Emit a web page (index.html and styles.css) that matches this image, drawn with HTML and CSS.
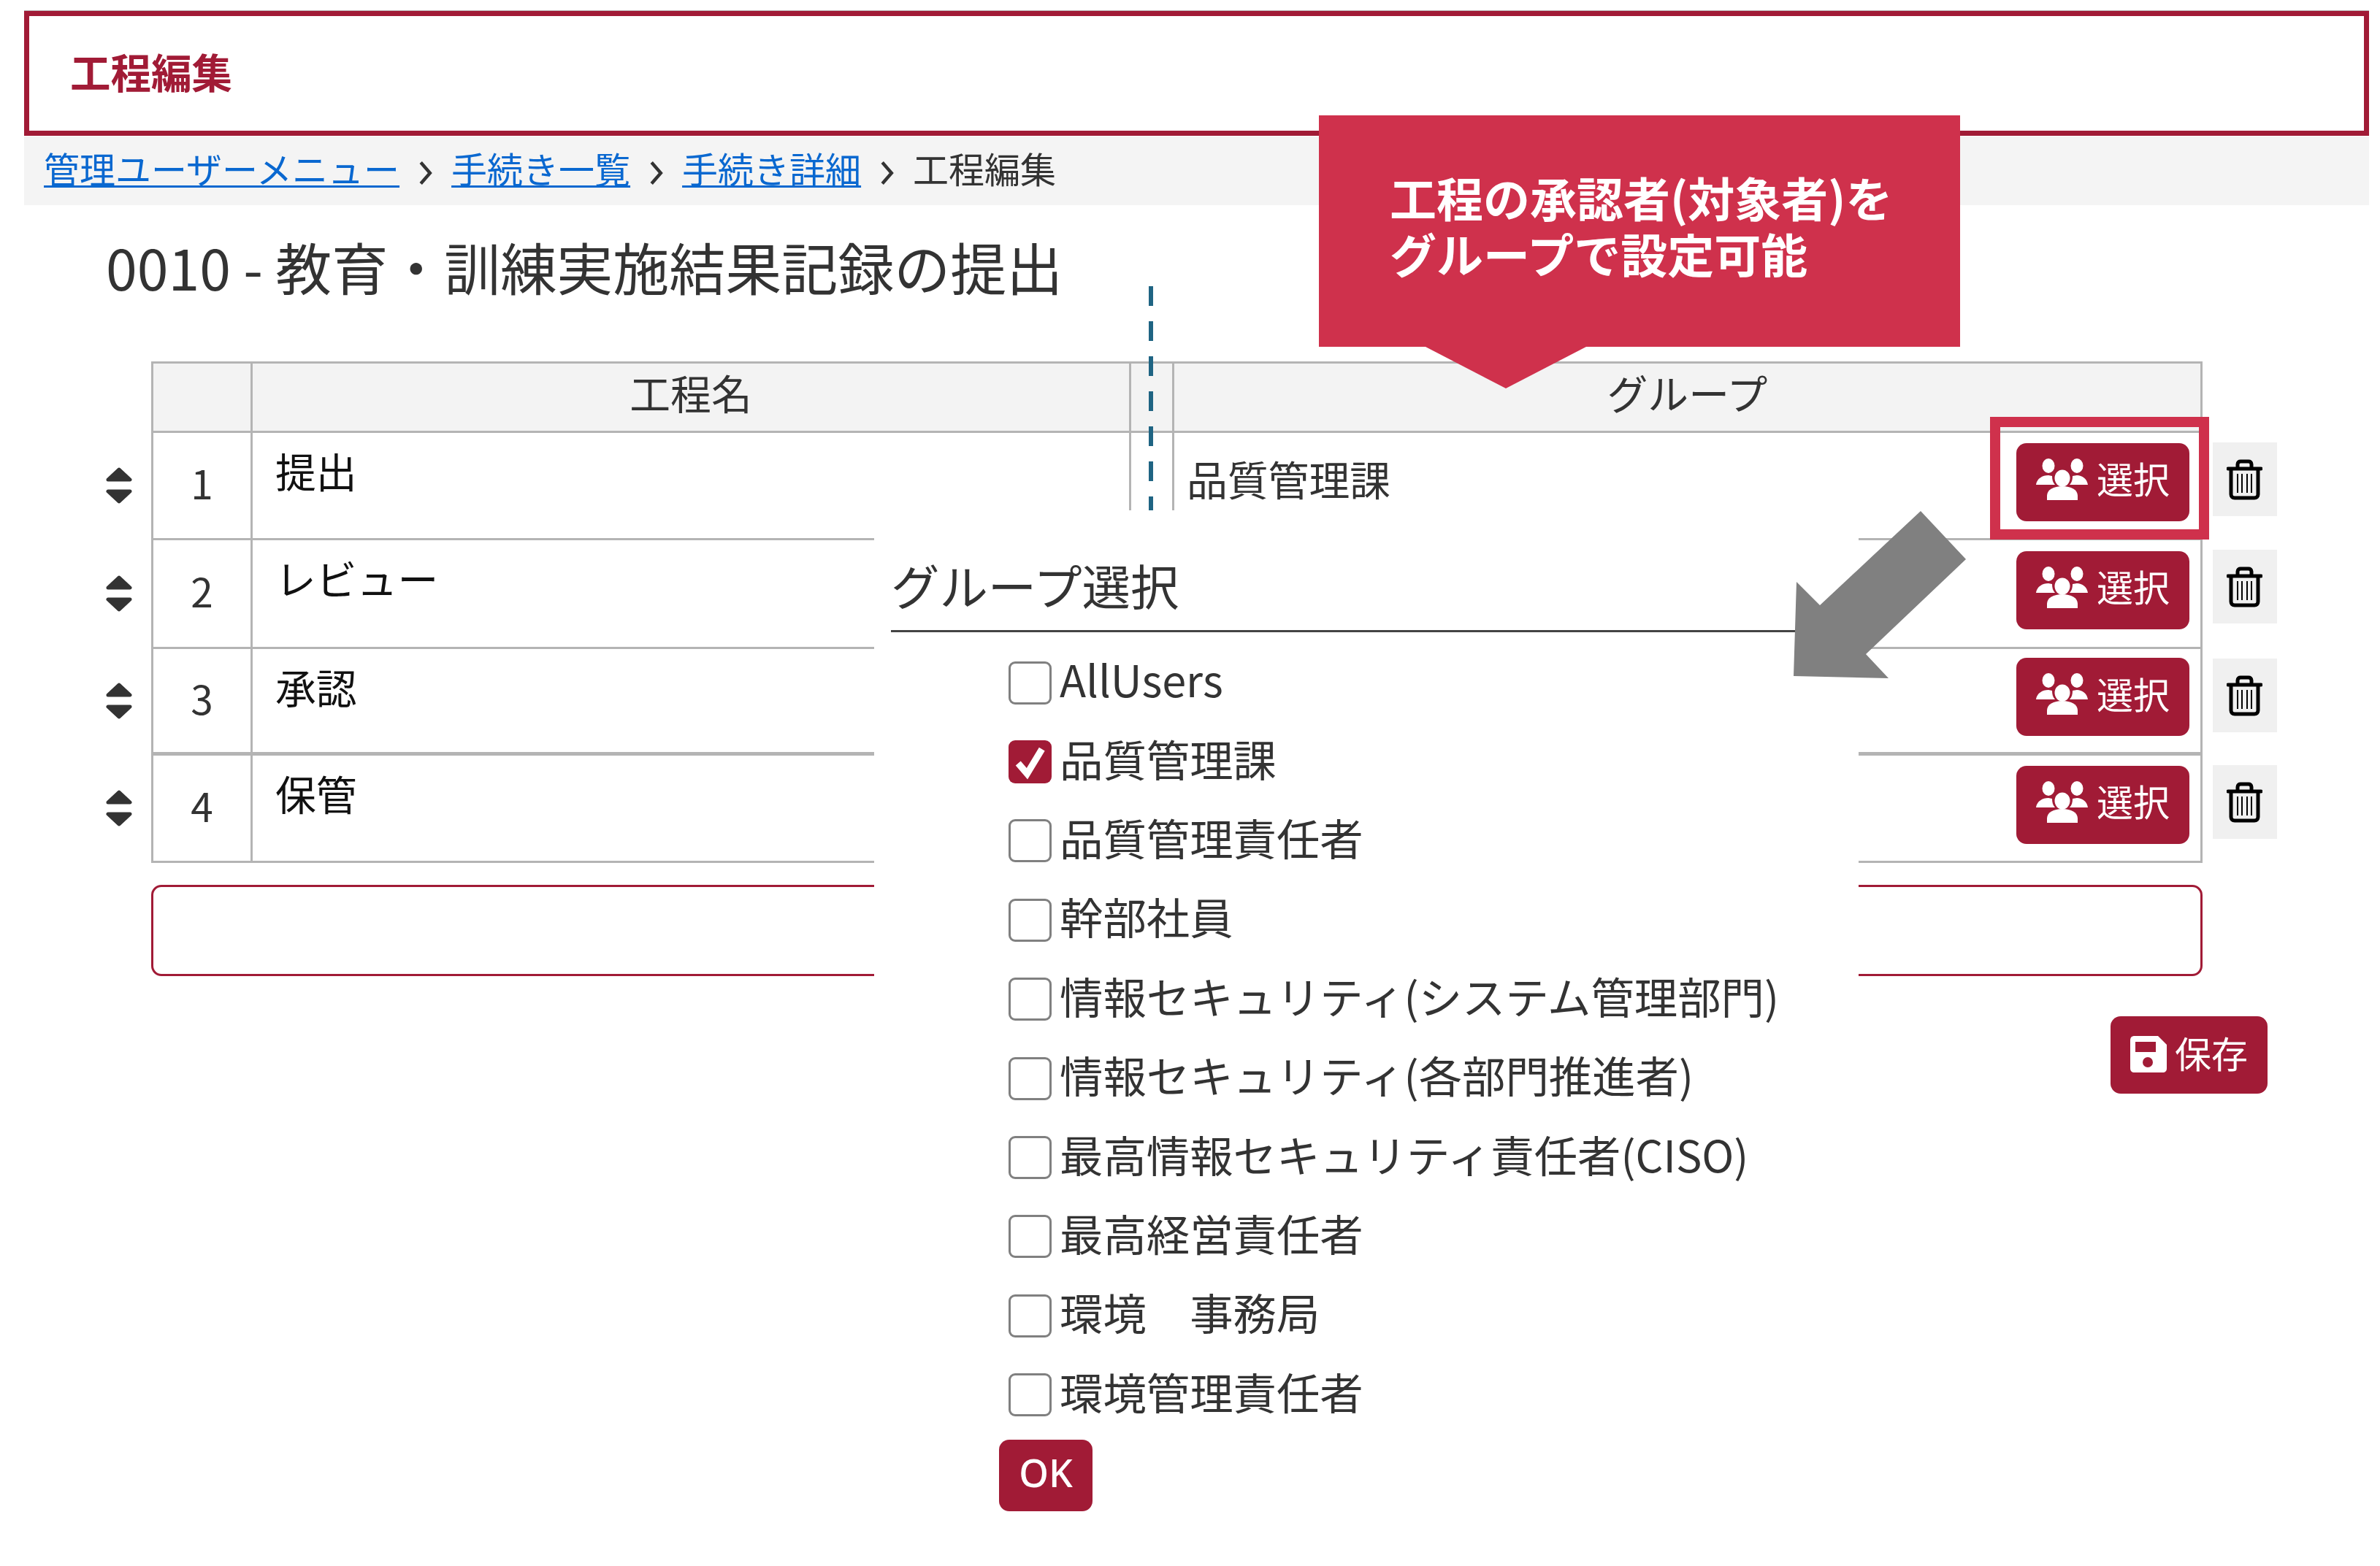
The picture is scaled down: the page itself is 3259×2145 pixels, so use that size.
FILE: index.html
```html
<!DOCTYPE html>
<html lang="ja">
<head>
<meta charset="utf-8">
<title>工程編集</title>
<link rel="stylesheet" href="styles.css">
</head>
<body>
<svg class="defs" width="0" height="0" aria-hidden="true">
  <symbol id="i-sort" viewBox="0 0 36 50">
    <path d="M18 3 L33 17 H3 Z M3 33 H33 L18 47 Z" fill="#333" stroke="#333" stroke-width="5" stroke-linejoin="round"/>
  </symbol>
  <symbol id="i-users" viewBox="0 0 71 57">
    <ellipse cx="17" cy="10" rx="8.5" ry="10" fill="#fff"/>
    <ellipse cx="56" cy="10" rx="8.5" ry="10" fill="#fff"/>
    <ellipse cx="36" cy="27" rx="10.5" ry="11.5" fill="#fff"/>
    <path d="M15 57 V51 C15 43 24 38 36 38 S57 43 57 51 V57 Z" fill="#fff"/>
    <path d="M0 36 C1 28 8 23 17 23 L22 24 C22 29 23 33 26 36 Z" fill="#fff"/>
    <path d="M71 36 C70 28 63 23 56 23 L50 24 C50 29 49 33 46 36 Z" fill="#fff"/>
  </symbol>
  <symbol id="i-trash" viewBox="0 0 49 56">
    <path d="M2 13 H47 M6 14 V48 C6 51 8 53 11 53 H38 C41 53 43 51 43 48 V14 M15 12 V7 C15 4 17 3 19 3 H30 C32 3 34 4 34 7 V12" fill="none" stroke="#000" stroke-width="5" stroke-linecap="round"/>
    <path d="M15 20 V46 M21 20 V46 M28 20 V46 M34 20 V46" fill="none" stroke="#000" stroke-width="2"/>
  </symbol>
</svg>

<div class="page">
  <header class="head"><h1 class="head-title">工程編集</h1></header>

  <nav class="crumbs">
    <a class="crumb-link" href="#">管理ユーザーメニュー</a>
    <svg class="sep" viewBox="0 0 24 40"><path d="M5 4 L19 20 L5 36" fill="none" stroke="#333" stroke-width="5"/></svg>
    <a class="crumb-link" href="#">手続き一覧</a>
    <svg class="sep" viewBox="0 0 24 40"><path d="M5 4 L19 20 L5 36" fill="none" stroke="#333" stroke-width="5"/></svg>
    <a class="crumb-link" href="#">手続き詳細</a>
    <svg class="sep" viewBox="0 0 24 40"><path d="M5 4 L19 20 L5 36" fill="none" stroke="#333" stroke-width="5"/></svg>
    <span>工程編集</span>
  </nav>

  <h2 class="proc-title">0010 - 教育・訓練実施結果記録の提出</h2>

  <section class="steps">
    <div class="row row-head">
      <div class="sort"></div>
      <div class="cells">
        <div class="cell"></div>
        <div class="cell cell-center">工程名</div>
        <div class="cell"></div>
        <div class="cell cell-center">グループ</div>
      </div>
    </div>

    <div class="row">
      <div class="sort"><svg class="sort-icon"><use href="#i-sort"/></svg></div>
      <div class="cells">
        <div class="cell cell-no">1</div>
        <div class="cell cell-name">提出</div>
        <div class="cell"></div>
        <div class="cell cell-group"><span class="group-name">品質管理課</span><button class="btn btn-select"><svg class="users-icon"><use href="#i-users"/></svg>選択</button></div>
      </div>
      <button class="trash"><svg class="trash-icon"><use href="#i-trash"/></svg></button>
    </div>

    <div class="row">
      <div class="sort"><svg class="sort-icon"><use href="#i-sort"/></svg></div>
      <div class="cells">
        <div class="cell cell-no">2</div>
        <div class="cell cell-name">レビュー</div>
        <div class="cell"></div>
        <div class="cell cell-group"><span class="group-name"></span><button class="btn btn-select"><svg class="users-icon"><use href="#i-users"/></svg>選択</button></div>
      </div>
      <button class="trash"><svg class="trash-icon"><use href="#i-trash"/></svg></button>
    </div>

    <div class="row">
      <div class="sort"><svg class="sort-icon"><use href="#i-sort"/></svg></div>
      <div class="cells">
        <div class="cell cell-no">3</div>
        <div class="cell cell-name">承認</div>
        <div class="cell"></div>
        <div class="cell cell-group"><span class="group-name"></span><button class="btn btn-select"><svg class="users-icon"><use href="#i-users"/></svg>選択</button></div>
      </div>
      <button class="trash"><svg class="trash-icon"><use href="#i-trash"/></svg></button>
    </div>

    <div class="row">
      <div class="sort"><svg class="sort-icon"><use href="#i-sort"/></svg></div>
      <div class="cells">
        <div class="cell cell-no">4</div>
        <div class="cell cell-name">保管</div>
        <div class="cell"></div>
        <div class="cell cell-group"><span class="group-name"></span><button class="btn btn-select"><svg class="users-icon"><use href="#i-users"/></svg>選択</button></div>
      </div>
      <button class="trash"><svg class="trash-icon"><use href="#i-trash"/></svg></button>
    </div>
  </section>

  <div class="note"></div>

  <div class="save-bar">
    <button class="btn btn-save">
      <svg class="save-icon" viewBox="0 0 50 50">
        <path d="M6 0 H38 L50 12 V44 C50 48 48 50 44 50 H6 C2 50 0 48 0 44 V6 C0 2 2 0 6 0 Z" fill="#fff"/>
        <rect x="7" y="8" width="28" height="14" fill="#a11b36"/>
        <circle cx="24" cy="36" r="7" fill="#a11b36"/>
      </svg>保存
    </button>
  </div>

  <div class="dash"></div>

  <aside class="dialog">
    <h3 class="dialog-title">グループ選択</h3>
    <ul class="group-list">
      <li class="group-item"><span class="box"></span>AllUsers</li>
      <li class="group-item"><span class="box box-on"><svg class="check" viewBox="0 0 58 58"><path d="M13 31 L25 45 L45 12" fill="none" stroke="#fff" stroke-width="9"/></svg></span>品質管理課</li>
      <li class="group-item"><span class="box"></span>品質管理責任者</li>
      <li class="group-item"><span class="box"></span>幹部社員</li>
      <li class="group-item"><span class="box"></span>情報セキュリティ(システム管理部門)</li>
      <li class="group-item"><span class="box"></span>情報セキュリティ(各部門推進者)</li>
      <li class="group-item"><span class="box"></span>最高情報セキュリティ責任者(CISO)</li>
      <li class="group-item"><span class="box"></span>最高経営責任者</li>
      <li class="group-item"><span class="box"></span>環境　事務局</li>
      <li class="group-item"><span class="box"></span>環境管理責任者</li>
    </ul>
    <button class="btn btn-ok">OK</button>
  </aside>

  <div class="callout">工程の承認者(対象者)を<br>グループで設定可能</div>
  <div class="highlight"></div>
  <svg class="arrow" viewBox="0 0 240 232"><polygon points="2,226 6,97 38,129 176,0 238,66 101,196 132,229" fill="#808080"/></svg>
</div>
</body>
</html>
```

FILE: styles.css
```css
* { box-sizing: border-box; }
html, body { margin: 0; padding: 0; background: #fff; }
body {
  width: 3259px;
  height: 2145px;
  overflow: hidden;
  font-family: "Noto Sans CJK JP", "Noto Sans", sans-serif;
  color: #333;
}
.defs { position: absolute; }
.page { position: relative; width: 3259px; height: 2145px; overflow: hidden; padding-top: 15px; }

.head {
  margin: 0 15px 0 33px;
  height: 171px;
  border: 7px solid #a11b36;
  display: flex;
  align-items: center;
  padding: 0 0 8px 56px;
  box-shadow: 0 -1px 0 #bbb;
}
.head-title { margin: 0; font-size: 55.5px; line-height: 70px; font-weight: 700; color: #a11b36; }

.crumbs {
  margin: 1px 15px 0 33px;
  height: 94px;
  background: #f4f4f4;
  display: flex;
  align-items: center;
  gap: 23px;
  padding: 0 0 0 27px;
  font-size: 49px;
  line-height: 60px;
}
.crumbs > a, .crumbs > span { margin-bottom: 8px; }
.crumb-link { color: #0a68d0; text-decoration: underline; text-underline-offset: 3px; text-decoration-thickness: 3px; }
.sep { width: 25px; height: 36px; flex: none; margin-top: 6px; }

.proc-title {
  width: fit-content;
  margin: 34px 0 80px 145px;
  font-size: 77px;
  line-height: 100px;
  font-weight: 400;
  color: #333;
}

.row { display: flex; height: 147px; align-items: stretch; }
.row:nth-child(3) { height: 149px; }
.row:nth-child(4) { height: 146px; }
.row:nth-child(4) .cells { border-bottom-width: 5px; }
.row-head { height: 98px; }
.sort { width: 207px; flex: none; display: flex; align-items: center; padding: 0 0 4px 145px; }
.sort-icon { width: 36px; height: 50px; }

.cells {
  width: 2809px;
  flex: none;
  display: grid;
  grid-template-columns: 136px 1203px 59px 1408px;
  border-left: 3px solid #b4b4b4;
  border-bottom: 3px solid #b4b4b4;
  font-size: 55.8px;
}
.row-head .cells { border-top: 3px solid #b4b4b4; background: #f3f3f3; }
.cell { border-right: 3px solid #b4b4b4; min-width: 0; }
.cell-center { display: flex; align-items: center; justify-content: center; line-height: 70px; padding-bottom: 14px; }
.cell-no { display: flex; align-items: center; justify-content: center; font-size: 55px; line-height: 70px; padding-bottom: 10px; }
.cell-name { padding: 11px 0 0 31px; line-height: 80px; color: #111; }
.cell-group {
  display: flex;
  align-items: center;
  justify-content: space-between;
  padding: 0 15px 10px 17px;
  line-height: 80px;
}
.group-name { margin-bottom: 10px; }

.btn {
  font-family: inherit;
  color: #fff;
  background: #a11b36;
  border: 0;
  border-radius: 14px;
  margin: 0;
  padding: 0;
  display: flex;
  align-items: center;
  justify-content: center;
}
.btn-select { width: 237px; height: 107px; font-size: 50px; gap: 12px; flex: none; padding-bottom: 12px; }
.users-icon { width: 71px; height: 57px; margin-top: 4px; }

.trash {
  align-self: flex-start;
  margin: 13px 0 0 14px;
  width: 88px;
  height: 101px;
  border: 0;
  padding: 0 2px 0 0;
  background: #f0f0f0;
  display: flex;
  align-items: center;
  justify-content: center;
}
.trash-icon { width: 49px; height: 56px; }

.note {
  margin: 30px 0 0 207px;
  width: 2809px;
  height: 125px;
  border: 3px solid #a11b36;
  border-radius: 14px;
}

.save-bar { display: flex; justify-content: flex-end; margin-top: 55px; padding-right: 154px; }
.btn-save { width: 215px; height: 106px; font-size: 50px; gap: 11px; padding-bottom: 8px; }
.save-icon { width: 50px; height: 50px; margin-top: 6px; }

.dash {
  position: absolute;
  left: 1573px;
  top: 392px;
  width: 6px;
  height: 307px;
  background: repeating-linear-gradient(to bottom, #1f6483 0 27px, transparent 27px 48px);
}

.dialog {
  position: absolute;
  left: 1197px;
  top: 699px;
  width: 1348px;
  height: 1446px;
  background: #fff;
  padding-left: 23px;
}
.dialog-title {
  margin: 0;
  padding-top: 61px;
  padding-bottom: 23px;
  width: 1240px;
  font-size: 66.4px;
  line-height: 80px;
  font-weight: 400;
  color: #333;
  border-bottom: 3px solid #444;
}
.group-list { list-style: none; margin: 13px 0 0; padding: 0 0 0 161px; }
.group-item {
  height: 108.4px;
  display: flex;
  align-items: center;
  gap: 11px;
  padding-bottom: 8px;
  font-size: 59.4px;
  line-height: 80px;
  color: #333;
}
.box {
  flex: none;
  width: 59px;
  height: 59px;
  margin-top: 12px;
  border: 3px solid #808080;
  border-radius: 9px;
  background: #fff;
}
.box-on { border: 0; background: #a11b36; }
.check { display: block; width: 59px; height: 59px; }

.btn-ok {
  margin: 9px 0 0 148px;
  width: 128px;
  height: 98px;
  font-size: 52px;
  font-family: "Noto Sans", sans-serif;
  font-weight: 500;
  padding-bottom: 8px;
}

.callout {
  position: absolute;
  left: 1806px;
  top: 158px;
  width: 878px;
  height: 317px;
  background: #cf314c;
  color: #fff;
  font-size: 64px;
  font-weight: 700;
  line-height: 77px;
  padding: 73px 0 0 97px;
}
.callout::after {
  content: "";
  position: absolute;
  left: 146px;
  top: 317px;
  border-left: 110px solid transparent;
  border-right: 110px solid transparent;
  border-top: 57px solid #cf314c;
}

.highlight {
  position: absolute;
  left: 2725px;
  top: 571px;
  width: 300px;
  height: 168px;
  border: 14px solid #cf314c;
}

.arrow { position: absolute; left: 2454px; top: 700px; width: 240px; height: 232px; }
```
